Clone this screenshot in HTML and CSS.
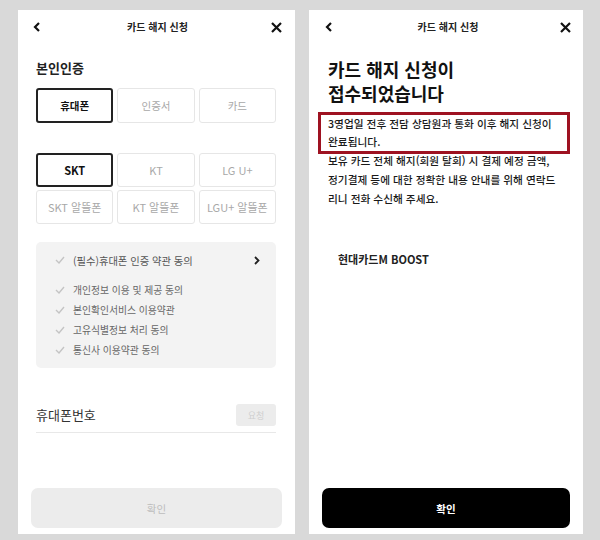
FILE: index.html
```html
<!DOCTYPE html>
<html lang="ko">
<head>
  <meta charset="UTF-8">
  <meta name="viewport" content="width=device-width, initial-scale=1.0">
  <title>카드 해지 신청</title>
  <link rel="stylesheet" href="styles.css">
</head>
<body>
  <section class="phone phone-auth">
    <header class="topbar">
      <span class="topbar-icon">
        <svg width="8" height="10" viewBox="0 0 8 10"><polyline points="6,1 2,5 6,9" fill="none" stroke="#111" stroke-width="2.2"/></svg>
      </span>
      <h1 class="topbar-title">카드 해지 신청</h1>
      <span class="topbar-icon right">
        <svg width="11" height="11" viewBox="0 0 11 11"><path d="M1 1 L10 10 M10 1 L1 10" stroke="#111" stroke-width="2.2"/></svg>
      </span>
    </header>
    <div class="content">
      <h2 class="section-title">본인인증</h2>
      <div class="choice-grid">
        <button class="choice selected">휴대폰</button>
        <button class="choice">인증서</button>
        <button class="choice">카드</button>
      </div>
      <div class="choice-grid carriers">
        <button class="choice selected">SKT</button>
        <button class="choice">KT</button>
        <button class="choice">LG U+</button>
        <button class="choice">SKT 알뜰폰</button>
        <button class="choice">KT 알뜰폰</button>
        <button class="choice">LGU+ 알뜰폰</button>
      </div>
      <div class="terms">
        <div class="terms-head">
          <span class="check"><svg width="10" height="8" viewBox="0 0 10 8"><polyline points="1,4 4,7 9,1" fill="none" stroke="#c4c4c4" stroke-width="1.4"/></svg></span>
          <span class="terms-title">(필수)휴대폰 인증 약관 동의</span>
          <svg class="terms-arrow" width="6" height="9" viewBox="0 0 6 9"><polyline points="1,1 4.5,4.5 1,8" fill="none" stroke="#222" stroke-width="1.8"/></svg>
        </div>
        <ul class="terms-list">
          <li><span class="check"><svg width="10" height="8" viewBox="0 0 10 8"><polyline points="1,4 4,7 9,1" fill="none" stroke="#c4c4c4" stroke-width="1.4"/></svg></span>개인정보 이용 및 제공 동의</li>
          <li><span class="check"><svg width="10" height="8" viewBox="0 0 10 8"><polyline points="1,4 4,7 9,1" fill="none" stroke="#c4c4c4" stroke-width="1.4"/></svg></span>본인확인서비스 이용약관</li>
          <li><span class="check"><svg width="10" height="8" viewBox="0 0 10 8"><polyline points="1,4 4,7 9,1" fill="none" stroke="#c4c4c4" stroke-width="1.4"/></svg></span>고유식별정보 처리 동의</li>
          <li><span class="check"><svg width="10" height="8" viewBox="0 0 10 8"><polyline points="1,4 4,7 9,1" fill="none" stroke="#c4c4c4" stroke-width="1.4"/></svg></span>통신사 이용약관 동의</li>
        </ul>
      </div>
      <div class="phone-field">
        <span class="phone-label">휴대폰번호</span>
        <button class="request-btn" disabled>요청</button>
      </div>
    </div>
    <div class="bottom">
      <button class="confirm-btn" disabled>확인</button>
    </div>
  </section>

  <section class="phone phone-done">
    <header class="topbar">
      <span class="topbar-icon">
        <svg width="8" height="10" viewBox="0 0 8 10"><polyline points="6,1 2,5 6,9" fill="none" stroke="#111" stroke-width="2.2"/></svg>
      </span>
      <h1 class="topbar-title">카드 해지 신청</h1>
      <span class="topbar-icon right">
        <svg width="11" height="11" viewBox="0 0 11 11"><path d="M1 1 L10 10 M10 1 L1 10" stroke="#111" stroke-width="2.2"/></svg>
      </span>
    </header>
    <div class="content">
      <h2 class="done-title">카드 해지 신청이<br>접수되었습니다</h2>
      <p class="notice highlight">3영업일 전후 전담 상담원과 통화 이후 해지 신청이<br>완료됩니다.</p>
      <p class="notice">보유 카드 전체 해지(회원 탈회) 시 결제 예정 금액,<br>정기결제 등에 대한 정확한 내용 안내를 위해 연락드<br>리니 전화 수신해 주세요.</p>
      <div class="card-name">현대카드M BOOST</div>
    </div>
    <div class="bottom">
      <button class="confirm-btn active">확인</button>
    </div>
  </section>
</body>
</html>
```

FILE: styles.css
```css
html, body {
  margin: 0;
  padding: 0;
  height: 100%;
}
body {
  display: flex;
  align-items: flex-start;
  gap: 14px;
  padding: 10px 0 0 18px;
  box-sizing: border-box;
  background-color: #d9d9d9;
  font-family: 'Noto Sans CJK KR', 'Noto Sans', sans-serif;
  color: #222;
}
button {
  font-family: inherit;
}
.phone {
  display: flex;
  flex-direction: column;
  height: 524px;
  background: white;
  box-sizing: border-box;
}
.phone-auth {
  width: 277px;
}
.phone-done {
  width: 274px;
}
.topbar {
  display: grid;
  grid-template-columns: 1fr auto 1fr;
  align-items: center;
  height: 34px;
  padding: 0 13px 0 15px;
}
.phone-done .topbar {
  padding: 0 12px 0 16px;
}
.topbar-icon {
  display: flex;
}
.topbar-icon.right {
  justify-content: flex-end;
}
.topbar-title {
  margin: 0;
  font-size: 10px;
  font-weight: 700;
  line-height: 14px;
}
.content {
  padding: 0 19px 0 18px;
}
.phone-done .content {
  padding: 0 19px;
}
.section-title {
  margin: 14px 0 10px;
  font-size: 13px;
  font-weight: 700;
  line-height: 20px;
}
.choice-grid {
  display: grid;
  grid-template-columns: repeat(3, 1fr);
  gap: 3px 4px;
}
.carriers {
  margin-top: 30px;
}
.choice {
  height: 35px;
  padding: 0;
  background: white;
  border: 1px solid #e6e6e6;
  border-radius: 3px;
  font-size: 10.5px;
  color: #a8a8a8;
  cursor: pointer;
}
.carriers .choice {
  height: 34px;
  font-size: 11px;
}
.choice.selected {
  border: 2px solid #222;
  color: #111;
  font-weight: 700;
}
.terms {
  margin-top: 18px;
  padding: 8px 16px 8px 18px;
  background: #f3f3f3;
  border-radius: 5px;
}
.terms-head {
  display: flex;
  align-items: center;
  height: 20px;
}
.check {
  display: flex;
  width: 18px;
  margin-left: 1px;
}
.terms-title {
  flex: 1;
  font-size: 10.3px;
  color: #555;
}
.terms-list {
  list-style: none;
  margin: 10px 0 0;
  padding: 0;
}
.terms-list li {
  display: flex;
  align-items: center;
  height: 20px;
  font-size: 9.8px;
  color: #666;
}
.phone-field {
  display: flex;
  align-items: center;
  justify-content: space-between;
  margin-top: 36px;
  padding-bottom: 6px;
  border-bottom: 1px solid #e8e8e8;
}
.phone-label {
  font-size: 13px;
  line-height: 22px;
  color: #333;
}
.request-btn {
  width: 40px;
  height: 22px;
  padding: 0;
  border: none;
  border-radius: 3px;
  background: #ececec;
  color: #cfcfcf;
  font-size: 9px;
}
.bottom {
  margin-top: auto;
  padding: 0 13px 6px;
}
.confirm-btn {
  display: block;
  width: 100%;
  height: 40px;
  border: none;
  border-radius: 7px;
  background: #ececec;
  color: #bdbdbd;
  font-size: 10.5px;
}
.confirm-btn.active {
  background: #000;
  color: white;
  font-weight: 700;
  cursor: pointer;
}
.done-title {
  margin: 13px 0 7px;
  font-size: 18px;
  font-weight: 700;
  line-height: 24px;
  color: #111;
}
.notice {
  margin: 0;
  font-size: 10.7px;
  font-weight: 500;
  line-height: 19px;
  white-space: nowrap;
  color: #1a1a1a;
}
.notice.highlight {
  margin: 0 -6px -3px -10px;
  padding: 0 4px 0 7px;
  line-height: 18px;
  border: 3px solid #9e1221;
}
.card-name {
  margin-top: 42px;
  padding-left: 10px;
  font-size: 11px;
  font-weight: 700;
  line-height: 18px;
}
```
